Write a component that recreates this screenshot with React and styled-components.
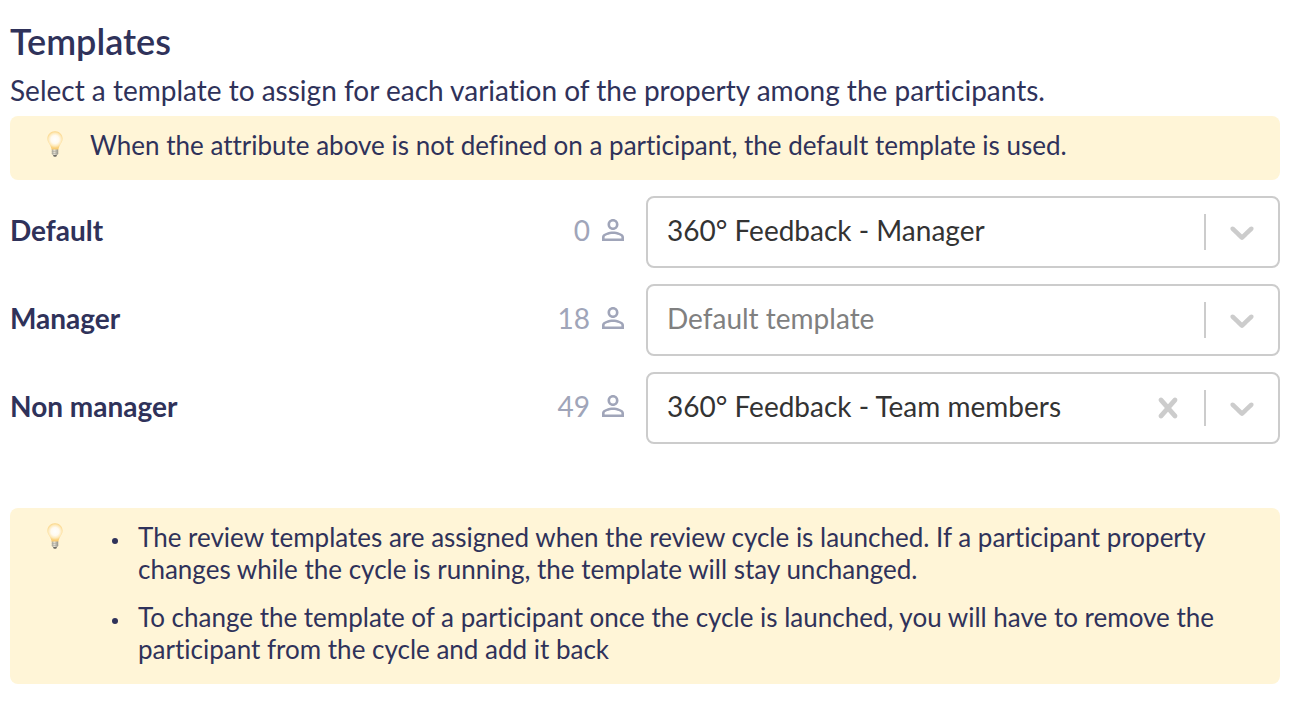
import React, { useState } from "react";
import styled, { createGlobalStyle } from "styled-components";

const GlobalStyle = createGlobalStyle`
  *, *::before, *::after { box-sizing: border-box; }
  body {
    margin: 0;
    background: #fff;
    color: #2f325a;
    font-family: Lato, "Liberation Sans", sans-serif;
    font-size: 28px;
    font-variant-ligatures: none;
  }
`;

const Page = styled.main`
  padding: 17px 24px 22px 10px;
`;

const Title = styled.h2`
  margin: 0;
  font-size: 36px;
  font-weight: 600;
  line-height: 48px;
`;

const Lead = styled.p`
  margin: 5px 0 6px;
  line-height: 40px;
`;

const NoteBox = styled.aside`
  display: flex;
  padding: 13px 32px 19px 37px;
  border-radius: 8px;
  background: #fff5d7;
  font-size: 26px;
  line-height: 32px;
`;

const NoteIcon = styled.span`
  display: flex;
  flex: 0 0 43px;
  align-items: flex-start;
  padding-top: 2px;
`;

const NoteText = styled.p`
  margin: 0;
`;

const NoteList = styled.ul`
  display: flex;
  flex-direction: column;
  gap: 16px;
  margin: 0;
  padding: 0 0 0 22px;
  list-style: none;
`;

const NoteItem = styled.li`
  display: flex;
  gap: 20px;

  &::before {
    content: "";
    flex: none;
    width: 6px;
    height: 6px;
    margin-top: 17px;
    border-radius: 50%;
    background: currentColor;
  }
`;

const Rows = styled.div`
  display: flex;
  flex-direction: column;
  gap: 16px;
  margin: 16px 0 64px;
`;

const Row = styled.div`
  display: grid;
  grid-template-columns: 1fr 1fr;
  gap: 2px;
  align-items: center;
`;

const RowInfo = styled.div`
  display: flex;
  align-items: center;
  justify-content: space-between;
  padding: 0 20px 4px 0;
  line-height: 40px;
`;

const RowLabel = styled.label`
  font-weight: 700;
`;

const Count = styled.span`
  display: flex;
  align-items: center;
  gap: 12px;
  color: #a0a5b9;
`;

const Control = styled.div`
  display: grid;
  grid-template-columns: minmax(0, 1fr);
  height: 72px;
  border: 2px solid #ccc;
  border-radius: 8px;
  background: #fff;
`;

const Select = styled.select`
  grid-area: 1 / 1;
  appearance: none;
  padding: 0 130px 4px 19px;
  border: 0;
  border-radius: 6px;
  background: transparent;
  color: ${(p) => (p.$empty ? "#808080" : "#333")};
  font: inherit;
  font-variant-ligatures: none;
`;

const Indicators = styled.div`
  grid-area: 1 / 1;
  display: flex;
  align-items: center;
  justify-self: end;
  pointer-events: none;
`;

const ClearButton = styled.button`
  display: flex;
  padding: 14px 16px;
  border: 0;
  background: none;
  color: #ccc;
  pointer-events: auto;
  cursor: pointer;
`;

const Separator = styled.span`
  width: 2px;
  height: 36px;
  background: #ccc;
`;

const Arrow = styled.span`
  display: flex;
  padding: 14px 16px;
  color: #ccc;
`;

function Bulb({ id }) {
  return (
    <svg width="16" height="26" viewBox="0 0 16 26" aria-hidden="true">
      <defs>
        <radialGradient id={`${id}-glass`} gradientUnits="userSpaceOnUse" cx="8" cy="8.500" r="9">
          <stop offset="0" stopColor="#fffffd" />
          <stop offset="0.45" stopColor="#fffaf0" />
          <stop offset="0.72" stopColor="#feeabb" />
          <stop offset="0.9" stopColor="#fbd586" />
          <stop offset="1" stopColor="#f9cd75" />
        </radialGradient>
        <linearGradient id={`${id}-cap`}>
          <stop offset="0" stopColor="#a5a294" />
          <stop offset="0.4" stopColor="#e6e2d6" />
          <stop offset="1" stopColor="#8f8c82" />
        </linearGradient>
      </defs>
      <path
        d="M8 .3C3.700 .3 .4 3.500 .4 7.800c0 2.500 1.200 4.100 2.400 6 1 1.600 1.500 3.200 1.900 5.200h6.600c.4-2 .9-3.600 1.900-5.200 1.200-1.900 2.400-3.500 2.400-6C15.600 3.500 12.300 .3 8 .3z"
        fill={`url(#${id}-glass)`}
      />
      <path d="M4.800 18.500h6.400v4.500l-1.300 1.300H6.100l-1.300-1.300z" fill={`url(#${id}-cap)`} />
      <path d="M4.800 20.600l6.400-.5M4.800 22.700l6.400-.5" stroke="#aaa79c" strokeWidth=".6" />
      <path d="M6 24h4l-.8 1.800H6.800z" fill="#6f6d66" />
    </svg>
  );
}

function Person() {
  return (
    <svg width="22" height="22" viewBox="4 4 16 16" fill="currentColor" aria-hidden="true">
      <path d="M12 5.900a2.100 2.100 0 1 1 0 4.200 2.100 2.100 0 0 1 0-4.200m0 9c2.970 0 6.100 1.460 6.100 2.100v1.100H5.900V17c0-.64 3.130-2.100 6.100-2.100M12 4C9.790 4 8 5.790 8 8s1.790 4 4 4 4-1.790 4-4-1.790-4-4-4zm0 9c-2.670 0-8 1.340-8 4v3h16v-3c0-2.660-5.330-4-8-4z" />
    </svg>
  );
}

function Chevron() {
  return (
    <svg width="40" height="40" viewBox="0 0 20 20" fill="currentColor" aria-hidden="true">
      <path d="M4.516 7.548c0.436-0.446 1.043-0.481 1.576 0l3.908 3.747 3.908-3.747c0.533-0.481 1.141-0.446 1.574 0 0.436 0.445 0.408 1.197 0 1.615-0.406 0.418-4.695 4.502-4.695 4.502-0.217 0.223-0.502 0.335-0.787 0.335s-0.570-0.112-0.789-0.335c0 0-4.287-4.084-4.695-4.502s-0.436-1.170 0-1.615z" />
    </svg>
  );
}

function Cross() {
  return (
    <svg width="40" height="40" viewBox="0 0 20 20" fill="currentColor" aria-hidden="true">
      <path d="M14.348 14.849c-0.469 0.469-1.229 0.469-1.697 0l-2.651-3.030-2.651 3.029c-0.469 0.469-1.229 0.469-1.697 0-0.469-0.469-0.469-1.229 0-1.697l2.758-3.150-2.759-3.152c-0.469-0.469-0.469-1.228 0-1.697s1.228-0.469 1.697 0l2.652 3.031 2.651-3.031c0.469-0.469 1.228-0.469 1.697 0s0.469 1.229 0 1.697l-2.758 3.152 2.758 3.150c0.469 0.469 0.469 1.229 0 1.698z" />
    </svg>
  );
}

const templates = ["360° Feedback - Manager", "360° Feedback - Team members"];

const groups = [
  { id: "default", label: "Default", count: 0, template: templates[0] },
  { id: "manager", label: "Manager", count: 18, template: "", optional: true },
  { id: "non-manager", label: "Non manager", count: 49, template: templates[1], optional: true },
];

function TemplateRow({ group }) {
  const [value, setValue] = useState(group.template);
  return (
    <Row>
      <RowInfo>
        <RowLabel htmlFor={group.id}>{group.label}</RowLabel>
        <Count>
          {group.count}
          <Person />
        </Count>
      </RowInfo>
      <Control>
        <Select id={group.id} value={value} $empty={!value} onChange={(e) => setValue(e.target.value)}>
          {group.optional && <option value="">Default template</option>}
          {templates.map((name) => (
            <option key={name}>{name}</option>
          ))}
        </Select>
        <Indicators>
          {group.optional && value && (
            <ClearButton type="button" aria-label={`Clear ${group.label}`} onClick={() => setValue("")}>
              <Cross />
            </ClearButton>
          )}
          <Separator />
          <Arrow>
            <Chevron />
          </Arrow>
        </Indicators>
      </Control>
    </Row>
  );
}

function Note({ id, children }) {
  return (
    <NoteBox>
      <NoteIcon>
        <Bulb id={id} />
      </NoteIcon>
      {children}
    </NoteBox>
  );
}

export default function App() {
  return (
    <>
      <GlobalStyle />
      <Page>
        <Title>Templates</Title>
        <Lead>Select a template to assign for each variation of the property among the participants.</Lead>
        <Note id="fallback">
          <NoteText>When the attribute above is not defined on a participant, the default template is used.</NoteText>
        </Note>
        <Rows>
          {groups.map((group) => (
            <TemplateRow key={group.id} group={group} />
          ))}
        </Rows>
        <Note id="launch">
          <NoteList>
            <NoteItem>
              The review templates are assigned when the review cycle is launched. If a participant property changes
              while the cycle is running, the template will stay unchanged.
            </NoteItem>
            <NoteItem>
              To change the template of a participant once the cycle is launched, you will have to remove the
              participant from the cycle and add it back
            </NoteItem>
          </NoteList>
        </Note>
      </Page>
    </>
  );
}
